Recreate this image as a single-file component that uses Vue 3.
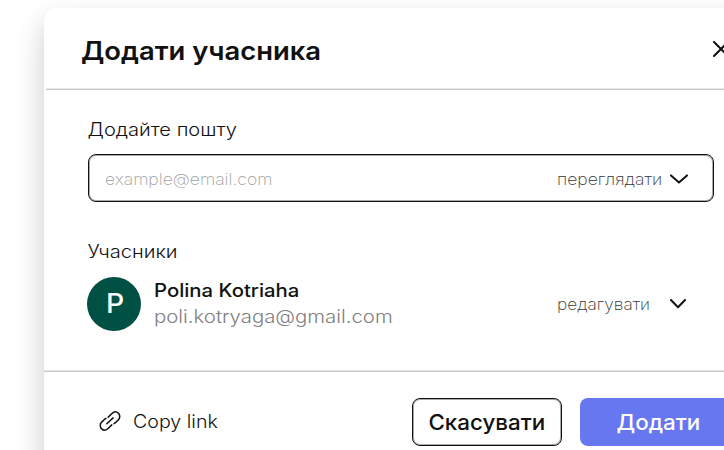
<script setup>
const participant = {
  initial: 'P',
  name: 'Polina Kotriaha',
  email: 'poli.kotryaga@gmail.com',
}
</script>

<template>
  <main class="stage">
    <section class="dialog">
      <header class="head">
        <h1 class="title">Додати учасника</h1>
        <svg class="close" viewBox="0 0 16 16"><path d="M1 1 15 15M15 1 1 15" /></svg>
      </header>

      <div class="body">
        <div class="label"><span class="t-label1">Додайте пошту</span></div>
        <div class="field">
          <span class="placeholder">example@email.com</span>
          <span class="role t-view">переглядати</span>
          <svg class="chevron wide" viewBox="0 0 18 10"><path d="M1 1.4 9 8.4 17 1.4" /></svg>
        </div>

        <div class="label second"><span class="t-label2">Учасники</span></div>
        <div class="person">
          <div class="avatar"><span>{{ participant.initial }}</span></div>
          <div class="who">
            <div class="name"><span class="t-name">{{ participant.name }}</span></div>
            <div class="email"><span class="t-email">{{ participant.email }}</span></div>
          </div>
          <span class="role t-edit">редагувати</span>
          <svg class="chevron" viewBox="0 0 16 10"><path d="M1 1 8 8.2 15 1" /></svg>
        </div>
      </div>

      <footer class="foot">
        <svg class="link" viewBox="0 0 22 20">
          <path d="M9.2 6.1 12.7 2.7C14.8.6 17.4.4 19.3 2.1 21.3 4 21.2 6.9 19.3 8.9L16.4 11.7C15.9 12.1 15.6 12.4 15.1 12.6" />
          <path d="M12.8 13.9 9.3 17.3C7.2 19.4 4.6 19.6 2.7 17.9.7 16 .8 13.1 2.7 11.1L5.6 8.3C6.1 7.9 6.4 7.6 6.9 7.4" />
          <path d="M7.8 12.8 14.1 6.9" />
        </svg>
        <span class="copy"><span class="t-copy">Copy link</span></span>
        <button class="btn cancel"><span class="t-cancel">Скасувати</span></button>
        <button class="btn add"><span class="t-add">Додати</span></button>
      </footer>
    </section>
  </main>
</template>

<style>
body {
  background: #fff;
  overflow: hidden;
}
</style>

<style scoped>
.stage {
  box-sizing: border-box;
  width: 724px;
  height: 450px;
  padding: 8px 0 0 44px;
  overflow: hidden;
  background: #fff;
  color: #111;
  font-family: Inter, "Open Sans", sans-serif;
}
.dialog {
  width: 716px;
  height: 470px;
  border-radius: 14px;
  background: #fff;
  box-shadow: 0 14px 30px rgba(0, 0, 0, 0.2);
}
.head {
  box-sizing: border-box;
  display: flex;
  align-items: center;
  height: 82px;
  margin-left: 2px;
  padding: 4px 31px 0 36px;
  border-bottom: 1px solid #c8c8c8;
  box-shadow: inset 0 -1px #e9e9e9;
}
.title {
  flex: 1;
  margin: 0 0 0 -1px;
  font-size: 25.5px;
  line-height: 32px;
  font-weight: 600;
  white-space: nowrap;
  transform: scaleX(1.075);
}
.title,
span {
  transform-origin: 0 50%;
}
.close {
  width: 16px;
  height: 16px;
  margin-bottom: 4px;
}
svg {
  flex: none;
  fill: none;
  stroke: #111;
  stroke-width: 2;
  stroke-linecap: round;
  stroke-linejoin: round;
}
.body {
  box-sizing: border-box;
  height: 281px;
  padding: 28px 46px 0 44px;
}
.label {
  height: 24px;
  font-size: 18px;
  line-height: 24px;
  font-weight: 350;
}
.label span,
.name span,
.email span,
.t-copy {
  display: inline-block;
  white-space: nowrap;
}
.t-label1,
.t-label2 {
  transform: translateX(-0.5px) scaleX(1.115);
}
.field {
  box-sizing: border-box;
  display: flex;
  align-items: center;
  height: 48px;
  margin-top: 12px;
  padding: 2px 25px 0 15.5px;
  border: 1px solid #111;
  border-radius: 8px;
  box-shadow: inset 0 0 0 1px #aaa;
}
.placeholder {
  flex: 1;
  color: #a0a0a0;
  font-size: 16px;
  font-weight: 250;
  transform: scaleX(1.095);
}
.role {
  width: 113px;
  color: #333;
  font-size: 16px;
  font-weight: 250;
  white-space: nowrap;
}
.t-view {
  transform: scaleX(1.1);
}
.t-edit {
  transform: scaleX(1.08);
}
.chevron {
  width: 16px;
  height: 10px;
  margin-right: 28px;
}
.chevron.wide {
  width: 18px;
  margin-right: 0;
}
.second {
  margin-top: 38px;
}
.person {
  display: flex;
  align-items: center;
  height: 54px;
  margin: 12.5px 0 0 -1px;
}
.avatar {
  display: flex;
  align-items: center;
  justify-content: center;
  width: 54px;
  height: 54px;
  border-radius: 50%;
  background: #005043;
  color: #fff;
  font-size: 27px;
  font-weight: 450;
}
.avatar span {
  transform: translateX(1px) scaleX(1.05);
}
.who {
  flex: 1;
  margin-left: 13px;
  padding-top: 1px;
  line-height: 26px;
  font-size: 18px;
}
.name {
  font-weight: 470;
}
.t-name {
  transform: scaleX(1.127);
}
.email {
  color: #808080;
  font-weight: 350;
}
.t-email {
  transform: scaleX(1.13);
}
.foot {
  display: flex;
  align-items: center;
  padding: 26px 0 0 55px;
  border-top: 1px solid #c8c8c8;
  box-shadow: 0 -1px #e3e3e3;
}
.link {
  width: 22px;
  height: 20px;
  margin-bottom: 2px;
  stroke-width: 1.5;
}
.copy {
  width: 279px;
  margin: 0 0 1px 12px;
  font-size: 18px;
  font-weight: 360;
}
.t-copy {
  transform: scaleX(1.09);
}
.btn {
  box-sizing: border-box;
  height: 48px;
  padding: 0;
  border: 1px solid #111;
  border-radius: 8px;
  background: #fff;
  box-shadow: inset 0 0 0 1px #aaa;
  color: #111;
  font-family: inherit;
  font-size: 21px;
  font-weight: 450;
}
.btn span {
  display: inline-block;
  transform-origin: 50% 50%;
  transform: scaleX(1.065);
}
.cancel {
  width: 150px;
}
.add {
  width: 156px;
  margin-left: 18px;
  border: 0;
  background: #6677f0;
  box-shadow: none;
  color: #fff;
}
</style>
